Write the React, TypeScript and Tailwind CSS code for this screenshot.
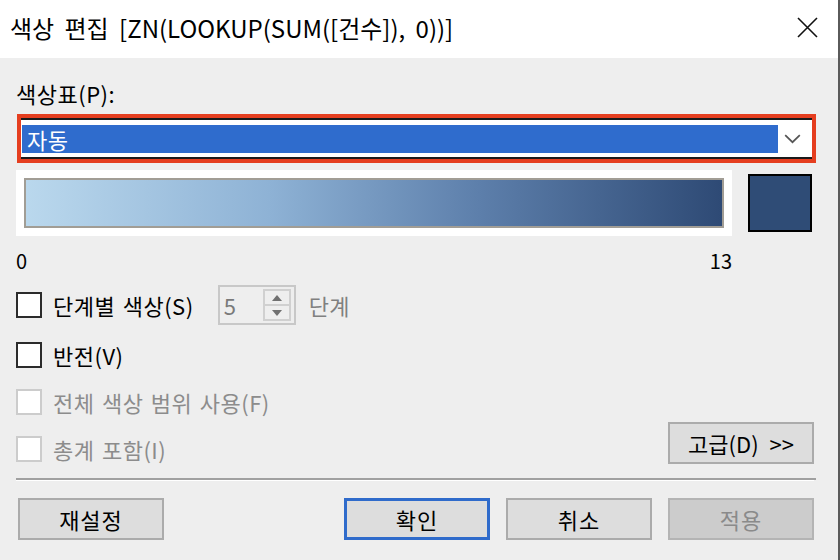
import React from "react";

const FONT = { fontFamily: '"Noto Sans CJK KR", "Noto Sans", sans-serif' };

function Check({ disabled, label }: { disabled?: boolean; label: React.ReactNode }) {
  return (
    <div className="flex items-center h-[26px]">
      <div
        className={
          "w-[26px] h-[26px] border-2 bg-white shrink-0 " +
          (disabled ? "border-[#cccccc]" : "border-[#2b2b2b]")
        }
      />
      <span
        className={
          "ml-[11px] text-[22px] leading-[26px] whitespace-nowrap tracking-[0.5px] [word-spacing:2px] " +
          (disabled ? "text-[#8c8c8c]" : "text-black")
        }
      >
        {label}
      </span>
    </div>
  );
}

function Btn({ children, variant }: { children: React.ReactNode; variant?: "primary" | "disabled" }) {
  const cls =
    variant === "primary"
      ? "border-[3px] border-[#2f6bcb] bg-[#dddddd] text-black"
      : variant === "disabled"
      ? "border-2 border-[#b4b4b4] bg-[#cccccc] text-[#8a8a8a]"
      : "border-2 border-[#ababab] bg-[#dddddd] text-black";
  return (
    <div className={"w-[146px] h-[42px] flex items-center justify-center text-[22px] tracking-[1px] " + cls}>
      {children}
    </div>
  );
}

export default function App() {
  return (
    <div
      className="w-[840px] h-[560px] flex flex-col bg-[#eeeeee] border-r-2 border-[#5a5a5a] overflow-hidden"
      style={FONT}
    >
      {/* title bar */}
      <div className="h-[58px] bg-white flex items-center justify-between pl-[10px] pr-[20px] shrink-0">
        <span className="text-[24px] text-black leading-none whitespace-nowrap [word-spacing:5px] mt-[-2px]">
          색상 편집 [ZN(LOOKUP(SUM([건수]), 0))]
        </span>
        <svg width="21" height="21" viewBox="0 0 21 21" className="mt-[-3px]">
          <path d="M1 1 L20 20 M20 1 L1 20" stroke="#111" strokeWidth="1.6" fill="none" />
        </svg>
      </div>

      <div className="flex flex-col pl-[16px] pr-[22px] pt-[21px]">
        <div className="h-[28px] text-[22px] leading-[28px] text-black tracking-[0.5px]">색상표(P):</div>

        {/* select with highlight */}
        <div className="mt-[7px] ml-[1px] w-[799px] h-[49px] border-4 border-[#e53e1f] bg-white">
          <div className="h-full border-y-2 border-[#1a1a1a] flex items-center pl-[1px] pr-[6px]">
            <div className="h-[28px] w-[756px] bg-[#2f6ccd] text-white text-[22px] leading-[28px] pl-[5px] tracking-[0.5px]">
              자동
            </div>
            <div className="flex-1 flex justify-center">
              <svg width="17" height="10" viewBox="0 0 17 10">
                <path d="M1.2 1.2 L8.5 8.2 L15.8 1.2" stroke="#555" strokeWidth="1.7" fill="none" />
              </svg>
            </div>
          </div>
        </div>

        {/* gradient row */}
        <div className="mt-[7px] flex items-center h-[66px]">
          <div className="w-[716px] h-[66px] bg-white p-[8px]">
            <div className="w-full h-full border-2 border-[#a19d95] bg-[linear-gradient(to_right,#bad8ed,#8eb2d5_35%,#5d7fab_65%,#2e4a75)]" />
          </div>
          <div className="ml-[16px] w-[64px] h-[58px] border-2 border-black bg-[#2f4c76]" />
        </div>

        {/* numbers */}
        <div className="mt-[14px] w-[716px] h-[22px] flex justify-between text-[20px] leading-[22px] text-black">
          <span>0</span>
          <span>13</span>
        </div>

        {/* row 1 */}
        <div className="mt-[13px] h-[40px] flex items-center">
          <Check label="단계별 색상(S)" />
          <div className="ml-[24px] w-[78px] h-[40px] border-2 border-[#c8c8c8] flex items-center justify-between pl-[4px] pr-[3px] shrink-0">
            <span className="text-[22px] text-[#7a7a7a]">5</span>
            <div className="w-[28px] h-[32px] border-2 border-[#d0d0d0] flex flex-col">
              <div className="flex-1 flex items-center justify-center border-b-2 border-[#d0d0d0]">
                <svg width="10" height="6" viewBox="0 0 10 6">
                  <path d="M0 6 L5 0 L10 6 Z" fill="#707070" />
                </svg>
              </div>
              <div className="flex-1 flex items-center justify-center">
                <svg width="10" height="6" viewBox="0 0 10 6">
                  <path d="M0 0 L5 6 L10 0 Z" fill="#707070" />
                </svg>
              </div>
            </div>
          </div>
          <span className="ml-[13px] text-[22px] text-[#808080] tracking-[0.5px]">단계</span>
        </div>

        <div className="mt-[17px]">
          <Check label="반전(V)" />
        </div>
        <div className="mt-[21px]">
          <Check disabled label="전체 색상 범위 사용(F)" />
        </div>

        <div className="mt-[7px] h-[42px] flex justify-between">
          <div className="mt-[14px]">
            <Check disabled label="총계 포함(I)" />
          </div>
          <div className="mr-[2px] w-[146px] h-[42px] border-2 border-[#ababab] bg-[#dddddd] flex items-center justify-center text-[22px] text-black [word-spacing:6px]">
            고급(D) &gt;&gt;
          </div>
        </div>

        {/* separator */}
        <div className="mt-[14px] h-[2px] bg-[#a0a0a0]" />
        <div className="h-[1px] bg-white mr-[2px]" />

        {/* buttons */}
        <div className="mt-[17px] flex px-[2px]">
          <Btn>재설정</Btn>
          <div className="flex-1" />
          <div className="flex gap-[16px]">
            <Btn variant="primary">확인</Btn>
            <Btn>취소</Btn>
            <Btn variant="disabled">적용</Btn>
          </div>
        </div>
      </div>
    </div>
  );
}
